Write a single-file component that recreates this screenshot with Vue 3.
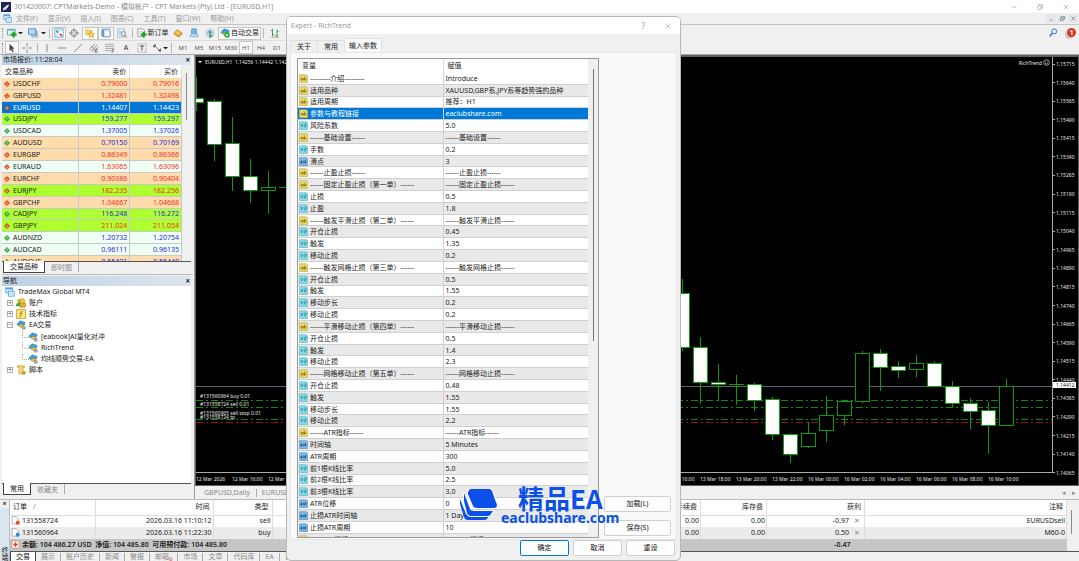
<script setup>
const hat = '<path d="M1 5L5 1L11 3L10 6Q5 5 3 7Z" fill="#3aa0d8" stroke="#1d6fa5" stroke-width=".6"/><path d="M4 6Q7 5 9 6L9 8Q6 10 4 8Z" fill="#f2c43c" stroke="#a8801a" stroke-width=".5"/>'
const icons = {
  app: '<rect width="12" height="12" fill="#1b2452"/><path d="M2 8L7 4L10 3L8 7L4 9Z" fill="#dfe4f4"/><path d="M2 10L7 8" stroke="#fff"/>',
  windows: '<rect x="1" y="1" width="8" height="6" fill="#dff0fb" stroke="#4a9fdc"/><path d="M1 2H9" stroke="#4a9fdc" stroke-width="1.5"/><rect x="4" y="5" width="7" height="6" fill="#e8f5fd" stroke="#4a9fdc"/><path d="M5 9L7 7L9 9" stroke="#4a9fdc" fill="none" stroke-width=".7"/>',
  newchart: '<rect x=".7" y="1.5" width="9" height="7" fill="#eaf5fa" stroke="#55a5a5"/><path d="M1 2.5H9" stroke="#3b8fb5"/><path d="M8 4.5V11.5M4.5 8H11.5" stroke="#16a51c" stroke-width="2.6"/>',
  profiles: '<rect x=".7" y="1" width="8.5" height="6.5" fill="#b9daf0" stroke="#4b88b8"/><path d="M3 9.5H10.5V3" stroke="#4b88b8" fill="none"/><path d="M5 11H12V5" stroke="#6f9dc0" fill="none" stroke-width=".8"/>',
  market: '<rect x="1" y="1" width="10" height="10" fill="#f5fbff" stroke="#5aa6da"/><path d="M3 3L5.5 5.5L3 6Z" fill="#25a03a"/><path d="M3 3L5 5" stroke="#25a03a" stroke-width="1.6"/><path d="M7 7L9.5 9.5" stroke="#e1452b" stroke-width="2.2"/><path d="M6 3H10M2 8.5H5" stroke="#9ac" stroke-width=".7"/>',
  target: '<circle cx="6" cy="6" r="3.8" fill="none" stroke="#777"/><path d="M6 0V5M6 7V12M0 6H5M7 6H12" stroke="#777"/>',
  navigator: '<path d="M1 2H4L5 3H8V8H1Z" fill="#f6d567" stroke="#c09a2a" stroke-width=".6"/><path d="M7.500 4L8.800 6.500L11.500 7L9.500 8.800L10 11.500L7.500 10.200L5 11.500L5.500 8.800L3.600 7L6.300 6.500Z" fill="#fbd443" stroke="#b88b16" stroke-width=".6"/>',
  data: '<rect x="1" y="1.500" width="10" height="9" rx="1" fill="#fff" stroke="#4178ba"/><rect x="1.500" y="2" width="2.500" height="8" fill="#5b94cf"/><path d="M5 3.500H10" stroke="#bcd"/>',
  tester: '<rect x="1" y="1" width="8" height="10" fill="#e7f1fa" stroke="#7aa6cb" stroke-width=".7"/><path d="M2 4H8M2 6H8M3 2V9" stroke="#9bb8d2" stroke-width=".5"/><circle cx="7.500" cy="7" r="2.700" fill="#d8ecf8" stroke="#6d87a0"/><path d="M9.500 9L11.500 11.500" stroke="#c59a2c" stroke-width="1.500"/>',
  order: '<path d="M1 1H7L9 3V10H1Z" fill="#fff" stroke="#777" stroke-width=".8"/><path d="M2.500 4H6M2.500 6H5" stroke="#999" stroke-width=".7"/><path d="M8 4.500V11.500M4.500 8H11.500" stroke="#16a51c" stroke-width="2.600"/>',
  editor: '<path d="M1 6L5 2L11 6L7 10Z" fill="#f0b93a" stroke="#a97515" stroke-width=".7"/><path d="M1 6L7 10L11 6V7.500L7 11.500L1 7.500Z" fill="#c98a1e"/><path d="M4 5L7 7" stroke="#fbe7a8"/>',
  cloud: '<rect x="3" y="1" width="6" height="6" rx="1" fill="#6eb8ee" stroke="#3c87c4" stroke-width=".8"/><path d="M2 10.500Q0 8 3 7.500Q5 5 7 7.500Q11 6.500 11 9Q11 10.500 9.500 10.500Z" fill="#c3def2" stroke="#5d97c6" stroke-width=".7"/>',
  signal: '<circle cx="6" cy="6" r="5" fill="none" stroke="#a9c9df"/><circle cx="6" cy="6" r="3" fill="none" stroke="#5e9fce"/><circle cx="6" cy="5" r="1.500" fill="#2f86c8"/><path d="M6 6V11L9 9" stroke="#2ea23a" stroke-width="1.500" fill="none"/>',
  auto: hat + '<circle cx="8.500" cy="8.500" r="3.300" fill="#1fae38"/><path d="M7.500 6.800L10.300 8.500L7.500 10.200Z" fill="#fff"/>',
  bars: '<path d="M3 1V10M1 3H3M3 8H5M8.500 2V11M6.500 9H8.500M8.500 4H10.500" stroke="#3a8a4a" fill="none"/><path d="M1 11H11" stroke="#777" stroke-width=".7"/>',
  cursor: '<path d="M3 1L9 7H6.500L8 10.500L6.500 11.200L5 7.800L3 9.500Z" fill="#444"/>',
  cross: '<path d="M6 0V4.500M6 7.500V12M0 6H4.500M7.500 6H12" stroke="#777"/>',
  vline: '<path d="M6 1V11" stroke="#777"/>',
  hline: '<path d="M1 6H11" stroke="#777"/>',
  trend: '<path d="M1.500 10.500L10.500 1.500" stroke="#777"/>',
  channel: '<path d="M0 8L7 1M2 10L10 2M4 11L11 5M3 4L7 8" stroke="#666" stroke-width=".8"/><path d="M8 8H11M8 8V12M8 10H10M8 12H11" stroke="#555" stroke-width=".8"/>',
  fibo: '<path d="M0 1.500H11M0 4H11M0 6.500H11M0 9H7" stroke="#888" stroke-width=".8"/><path d="M8.500 8V12M8.500 8H11M8.500 10H10.500" stroke="#555" stroke-width=".8"/>',
  label: '<rect x="1" y="1" width="10" height="10" fill="none" stroke="#888" stroke-dasharray="2 1" stroke-width=".8"/><path d="M3.500 3.500H8.500M6 3.500V9" stroke="#555" stroke-width="1.200"/>',
  arrows: '<path d="M1 3.500L4 1L5 4.500L3.500 4.500L2.500 6Z" fill="#666"/><path d="M4 4L8 8" stroke="#666"/><path d="M7 9L11 6L10.500 11Z" fill="#666"/>',
  accounts: '<circle cx="4" cy="3.500" r="2.500" fill="#e8b22c"/><path d="M0 10Q0 5.500 4 5.500Q7 5.500 7 10Z" fill="#2fae3d"/><circle cx="7.500" cy="3.800" r="3" fill="#f1c945" stroke="#a67a10" stroke-width=".6"/><rect x="4.500" y="6" width="7" height="5" rx="1" fill="#e3b02b" stroke="#9a7110" stroke-width=".6"/>',
  func: '<rect x=".8" y=".8" width="10.400" height="10.400" fill="#ffe680" stroke="#c69b29"/><path d="M8 3Q6 2.500 6 5L5.300 8.500Q5 10 4 9.300M4.300 5.500H7.500" stroke="#8a6713" fill="none" stroke-width=".9"/>',
  expert: hat + '<circle cx="9.300" cy="9.300" r="1.900" fill="#bbb" stroke="#666" stroke-width=".7"/>',
  script: '<path d="M2 1H10V3H8.500V8H11V10.500H3.500V3H2Z" fill="#f7da6b" stroke="#b08c22" stroke-width=".7"/><circle cx="9" cy="9.500" r="1.700" fill="#d8a820" stroke="#8a6713" stroke-width=".5"/>',
  ab: '<path d="M.5 1H10L11.500 2.500V11.500H.5Z" fill="#e8d96a" stroke="#c0ae45" stroke-width=".9"/><circle cx="4" cy="7" r="1.300" fill="none" stroke="#6b5e12" stroke-width=".9"/><path d="M5.500 5.500V8.500M7.200 3.500V8.500" stroke="#6b5e12" stroke-width=".8"/><circle cx="8.400" cy="7" r="1.200" fill="none" stroke="#6b5e12" stroke-width=".8"/>',
  num: '<path d="M.5 1H10L11.500 2.500V11.500H.5Z" fill="#86dbe8" stroke="#58b9ca" stroke-width=".9"/><path d="M2.500 4L4 8L5.500 4M7 4H9.500V6H7.500V8H9.500" fill="none" stroke="#2b7f93" stroke-width=".9"/>',
  int: '<path d="M.5 1H10L11.500 2.500V11.500H.5Z" fill="#7db8e8" stroke="#4f8ec6" stroke-width=".9"/><path d="M2.500 5.500H4V8H2.500V6.500H4M5.500 5.500H7V8H5.500M8.800 4V8.500" fill="none" stroke="#14406f" stroke-width="1"/>',
  up: '<path d="M6 .8L11.200 6L6 11.200L.8 6Z" fill="#35b44a" stroke="#1b7a2c"/><path d="M6 3.500V8.500M4 5.500L6 3.500L8 5.500" stroke="#b5ebb5" fill="none"/>',
  down: '<path d="M6 .8L11.200 6L6 11.200L.8 6Z" fill="#e65228" stroke="#a8300f"/><path d="M6 3.500V8.500M4 6.500L6 8.500L8 6.500" stroke="#ffc4a8" fill="none"/>',
  sell: '<path d="M1.500 .8H7L9.500 3.300V10.800H1.500Z" fill="#fff" stroke="#888" stroke-width=".8"/><circle cx="9" cy="9" r="2.800" fill="#e2502a"/>',
  buy: '<path d="M1.500 .8H7L9.500 3.300V10.800H1.500Z" fill="#fff" stroke="#888" stroke-width=".8"/><circle cx="9" cy="9" r="2.800" fill="#2d8edb"/>',
  balance: '<rect x=".8" y=".8" width="10.400" height="10.400" rx="2" fill="#fbe9e3" stroke="#9b9b9b"/><path d="M6 3V9M3 6H9" stroke="#d8431d" stroke-width="1.800"/>',
  search: '<circle cx="7" cy="4.500" r="3.300" fill="#e6f0ff" stroke="#3c6fd0" stroke-width="1.300"/><path d="M4.500 7L1 11" stroke="#3c6fd0" stroke-width="2"/>'
}
const menus = ['文件(F)', '显示(V)', '插入(I)', '图表(C)', '工具(T)', '窗口(W)', '帮助(H)']
const bar1 = [
  { i: 'newchart', w: 'w14', t: '新图表' }, { caret: 1 }, { i: 'profiles', w: 'w18', t: '配置' }, { caret: 1 }, { sep: 1 },
  { i: 'market', w: 'w14', on: 1, t: '市场报价' }, { i: 'target', w: 'w16', t: '数据窗口' }, { i: 'navigator', w: 'w16', on: 1, t: '导航' },
  { i: 'data', w: 'w16', on: 1, t: '终端' }, { i: 'tester', w: 'w16', t: '测试' }, { sep: 1 },
  { i: 'order', w: 'w36', label: '新订单' }, { i: 'editor', w: 'w16', t: '编辑器' }, { i: 'cloud', w: 'w16', t: '云' },
  { i: 'signal', w: 'w16', t: '信号' }, { i: 'auto', w: 'w44', label: '自动交易', on: 1 }, { sep: 1 }, { i: 'bars', w: 'w18', t: '柱状图' }
]
const bar2 = [
  { i: 'cursor', w: 'w14', on: 1, t: '光标' }, { i: 'cross', w: 'w16', t: '十字' }, { sep: 1 }, { i: 'vline', w: 'w14', t: '垂直线' },
  { i: 'hline', w: 'w16', t: '水平线' }, { i: 'trend', w: 'w16', t: '趋势线' }, { i: 'channel', w: 'w16', t: '通道' },
  { i: 'fibo', w: 'w16', t: '斐波那契' }, { label: 'A', w: 'w16' }, { i: 'label', w: 'w16', t: '标签' },
  { i: 'arrows', w: 'w14', t: '箭头' }, { caret: 1 }, { sep: 1 }, { gap: 1 },
  { label: 'M1', w: 'w16 tf' }, { label: 'M5', w: 'w16 tf' }, { label: 'M15', w: 'w16 tf' }, { label: 'M30', w: 'w16 tf' },
  { label: 'H1', w: 'w14 tf', on: 1 }, { label: 'H4', w: 'w16 tf' }, { label: 'D1', w: 'w16 tf' }
]
const quotes = [
  ['USDCHF', '0.79000', '0.79016', 'down', 'peach'], ['GBPUSD', '1.32481', '1.32498', 'down', 'peach'],
  ['EURUSD', '1.14407', '1.14423', 'down', 'sel'], ['USDJPY', '159.277', '159.297', 'up', 'lime'],
  ['USDCAD', '1.37005', '1.37026', 'up', 'mint'], ['AUDUSD', '0.70150', '0.70169', 'up', 'peach'],
  ['EURGBP', '0.86349', '0.86366', 'down', 'peach'], ['EURAUD', '1.63065', '1.63096', 'down', 'mint'],
  ['EURCHF', '0.90386', '0.90404', 'down', 'peach'], ['EURJPY', '182.235', '182.256', 'down', 'lime'],
  ['GBPCHF', '1.04667', '1.04688', 'down', 'peach'], ['CADJPY', '116.248', '116.272', 'up', 'lime'],
  ['GBPJPY', '211.024', '211.054', 'down', 'lime'], ['AUDNZD', '1.20732', '1.20754', 'up', 'mint'],
  ['AUDCAD', '0.96111', '0.96135', 'up', 'mint'], ['AUDCHF', '0.55421', '0.55440', 'up', 'peach']
]
const tree = [
  ['windows', 'TradeMax Global MT4', 0, ''], ['accounts', '账户', 1, '+'], ['func', '技术指标', 1, '+'], ['expert', 'EA交易', 1, '−'],
  ['expert', '[eabook]AI量化对冲', 2, ''], ['expert', 'RichTrend', 2, ''], ['expert', '均线顺势交易-EA', 2, ''], ['script', '脚本', 1, '+']
]
const params = [
  ['ab', '---------介绍---------', 'Introduce'], ['ab', '适用品种', 'XAUUSD,GBP系,JPY系等趋势强的品种'],
  ['ab', '适用周期', '推荐：H1'], ['ab', '参数与教程链接', 'eaclubshare.com'], ['num', '风险系数', '5.0'],
  ['ab', '------基础设置------', '------基础设置------'], ['num', '手数', '0.2'], ['int', '滑点', '3'],
  ['ab', '------止盈止损------', '------止盈止损------'], ['ab', '------固定止盈止损（第一单）------', '------固定止盈止损------'],
  ['num', '止损', '0.5'], ['num', '止盈', '1.8'], ['ab', '------触发平滑止损（第二单）------', '------触发平滑止损------'],
  ['num', '开仓止损', '0.45'], ['num', '触发', '1.35'], ['num', '移动止损', '0.2'],
  ['ab', '------触发网格止损（第三单）------', '------触发网格止损------'], ['num', '开仓止损', '0.5'], ['num', '触发', '1.55'],
  ['num', '移动步长', '0.2'], ['num', '移动止损', '0.2'], ['ab', '------平滑移动止损（第四单）------', '------平滑移动止损------'],
  ['num', '开仓止损', '0.5'], ['num', '触发', '1.4'], ['num', '移动止损', '2.3'],
  ['ab', '------网格移动止损（第五单）------', '------网格移动止损------'], ['num', '开仓止损', '0.48'], ['num', '触发', '1.55'],
  ['num', '移动步长', '1.55'], ['num', '移动止损', '2.2'], ['ab', '------ATR指标------', '------ATR指标------'],
  ['int', '时间轴', '5 Minutes'], ['int', 'ATR周期', '300'], ['num', '前1根K线比率', '5.0'], ['num', '前2根K线比率', '2.5'],
  ['num', '前3根K线比率', '3.0'], ['int', 'ATR位移', '0'], ['int', '止损ATR时间轴', '1 Day'], ['int', '止损ATR周期', '10'],
  ['ab', '------MA指标------', '------MA指标------']
]
// x, high, top, bottom, low, filled
const candles = [
  [196, 77, 98, 102, 111, 1], [214, 99, 101, 144, 161, 1], [232, 117, 143, 176, 191, 1], [250, 159, 176, 190, 203, 1],
  [268, 171, 187, 190, 214, 0], [286, 161, 187, 187, 208, 0], [682, 279, 293, 347, 351, 1], [700, 337, 347, 382, 404, 1],
  [718, 364, 382, 384, 401, 1], [736, 375, 384, 384, 405, 0], [754, 383, 384, 400, 411, 1], [772, 397, 399, 434, 440, 1],
  [790, 433, 434, 454, 463, 1], [808, 422, 433, 446, 448, 0], [826, 396, 415, 430, 442, 0], [844, 400, 401, 415, 425, 0],
  [862, 351, 353, 401, 403, 0], [880, 349, 353, 367, 391, 1], [898, 361, 366, 370, 378, 1], [916, 355, 363, 369, 377, 0],
  [934, 361, 363, 386, 386, 1], [952, 381, 386, 403, 408, 1], [970, 398, 403, 411, 429, 1], [988, 402, 410, 425, 454, 1],
  [1006, 379, 386, 425, 425, 0]
]
const prices = Array.from({ length: 23 }, (_, n) => (1.15715 - n * 0.00075).toFixed(5))
const times = ['12 Mar 2026', '12 Mar 16:00', '12 Mar 18:00', '12 Mar 20:00', '12 Mar 22:00', '13 Mar 00:00', '13 Mar 02:00',
  '13 Mar 04:00', '13 Mar 06:00', '13 Mar 08:00', '13 Mar 10:00', '13 Mar 12:00', '13 Mar 14:00', '13 Mar 16:00', '13 Mar 18:00',
  '13 Mar 20:00', '13 Mar 22:00', '16 Mar 00:00', '16 Mar 02:00', '16 Mar 04:00', '16 Mar 06:00', '16 Mar 08:00', '16 Mar 10:00']
const bottomTabs = ['展示', '账户历史', '新闻', '警报', '邮箱', '市场', '文章', '代码库', 'EA', '日志']
</script>

<template>
  <div class="window">
    <header class="titlebar">
      <svg class="ico" viewBox="0 0 12 12" v-html="icons.app" />
      <span class="caption">301420007: CPTMarkets-Demo - 模拟帐户 - CPT Markets (Pty) Ltd - [EURUSD,H1]</span>
      <div class="winbtns">
        <button aria-label="最小化"><svg viewBox="0 0 10 10"><path d="M1 5H9" /></svg></button>
        <button aria-label="还原"><svg viewBox="0 0 10 10"><rect x="1" y="3" width="6" height="6" rx="1" /><path d="M3 3V1H9V7H7" /></svg></button>
        <button aria-label="关闭"><svg viewBox="0 0 10 10"><path d="M1 1L9 9M9 1L1 9" /></svg></button>
      </div>
    </header>
    <nav class="menubar">
      <svg class="ico" viewBox="0 0 12 12" v-html="icons.windows" />
      <button v-for="m in menus" :key="m">{{ m }}</button>
      <div class="mdi">
        <button aria-label="最小化图表"><svg viewBox="0 0 10 10"><path d="M1 8H7" /></svg></button>
        <button aria-label="还原图表"><svg viewBox="0 0 10 10"><rect x="1" y="4" width="5" height="5" /><path d="M3 4V1H9V6H6" /></svg></button>
        <button aria-label="关闭图表"><svg viewBox="0 0 10 10"><path d="M1 1L8 9M8 1L1 9" /></svg></button>
      </div>
    </nav>
    <div class="tools">
      <div class="bars">
        <div v-for="(bar, b) in [bar1, bar2]" :key="b" class="toolbar">
          <i class="grip" />
          <template v-for="(t, n) in bar" :key="n">
            <i v-if="t.sep" class="sep" />
            <i v-else-if="t.caret" class="caret" />
            <i v-else-if="t.gap" class="gap" />
            <button v-else :class="['tool', t.w, { on: t.on }]" :aria-label="t.label || t.t">
              <svg v-if="t.i" class="ico" viewBox="0 0 12 12" v-html="icons[t.i]" /><span v-if="t.label">{{ t.label }}</span>
            </button>
          </template>
        </div>
      </div>
      <div class="alerts">
        <button aria-label="搜索"><svg class="ico small" viewBox="0 0 12 12" v-html="icons.search" /></button>
        <button class="bell" aria-label="通知"><b>1</b></button>
      </div>
    </div>

    <main class="work">
      <aside class="side">
        <section class="panel watch">
          <div class="head"><span>市场报价: 11:28:04</span><button aria-label="关闭市场报价">×</button></div>
          <div class="scroller">
            <div class="clip">
              <table class="quotes">
                <thead><tr><th>交易品种</th><th>卖价</th><th>买价</th></tr></thead>
                <tbody>
                  <tr v-for="q in quotes" :key="q[0]" :class="[q[4], q[3]]">
                    <td><svg class="dia" viewBox="0 0 12 12" v-html="icons[q[3]]" />{{ q[0] }}</td><td>{{ q[1] }}</td><td>{{ q[2] }}</td>
                  </tr>
                </tbody>
              </table>
            </div>
            <i class="thumb" />
          </div>
          <div class="tabs"><button class="active">交易品种</button><button>即时图</button></div>
        </section>
        <section class="panel nav">
          <div class="head"><span>导航</span><button aria-label="关闭导航">×</button></div>
          <div class="treebox">
            <ul class="tree">
              <li v-for="(n, k) in tree" :key="k" :class="'lv' + n[2]">
                <i v-if="n[3]" class="exp">{{ n[3] }}</i>
                <svg class="ico" viewBox="0 0 12 12" v-html="icons[n[0]]" />{{ n[1] }}
              </li>
            </ul>
          </div>
          <div class="tabs"><button class="active">常用</button><button>收藏夹</button></div>
        </section>
      </aside>

      <section class="chart">
        <div class="canvas">
          <div class="plotcol">
            <div class="plot">
              <svg class="candles" viewBox="196 57 856 415" preserveAspectRatio="none" shape-rendering="crispEdges">
                <path d="M196 386.5H1052" stroke="#57626f" />
                <g stroke="#138513" stroke-dasharray="7 3 2 3"><path d="M196 400.500H1052M196 407.500H1052M196 419.500H1052" /></g>
                <path d="M196 422.500H1052" stroke="#9c0d0d" stroke-dasharray="7 3 2 3" />
                <g v-for="c in candles" :key="c[0]" stroke="#0a9a0a">
                  <path :d="`M${c[0] + .5} ${c[1]}V${c[4]}`" />
                  <rect :x="c[0] - 6.5" :y="c[2] + .5" width="14" :height="c[3] - c[2]" :fill="c[5] ? '#fff' : '#000'" />
                  <path v-if="c[2] === c[3]" :d="`M${c[0] - 7} ${c[2] + .5}H${c[0] + 8}`" />
                </g>
              </svg>
              <span class="symbol">EURUSD,H1&nbsp; 1.14256 1.14442 1.14253 1.14412</span>
              <span class="ea">RichTrend <svg viewBox="0 0 10 10"><circle cx="5" cy="5" r="4" /><path d="M3 6Q5 8 7 6M3.500 3.500V4.500M6.500 3.500V4.500" /></svg></span>
              <span class="trade t1">#131560964 buy 0.01</span>
              <span class="trade t2">#131558724 sell 0.01</span>
              <span class="trade t3">#131560965 sell stop 0.01</span>
              <span class="trade t4">#131558724 tp</span>
            </div>
            <div class="timeaxis"><span v-for="t in times" :key="t">{{ t }}</span></div>
          </div>
          <div class="priceaxis">
            <span v-for="p in prices" :key="p">{{ p }}</span>
            <b class="now">1.14412</b>
          </div>
        </div>
        <div class="charttabs"><button>GBPUSD,Daily</button><button>EURUSD,H1</button><div class="arrows"><button aria-label="向左">◂</button><button aria-label="向右">▸</button></div></div>
      </section>
    </main>

    <section class="terminal">
      <div class="strip"><button aria-label="关闭终端">×</button><span>终端</span></div>
      <div class="termbody">
        <div class="termtable">
          <table>
            <colgroup><col class="c1"><col class="c2"><col class="c3"><col><col class="c5"><col class="c6"><col class="c7"></colgroup>
            <thead><tr><th>订单<em>/</em></th><th>时间</th><th>类型</th><th>手续费</th><th>库存费</th><th>获利</th><th>注释</th></tr></thead>
            <tbody>
              <tr><td><svg class="ico small" viewBox="0 0 12 12" v-html="icons.sell" />131558724</td><td>2026.03.16 11:10:12</td><td>sell</td><td>0.00</td><td>0.00</td><td>-0.97<button aria-label="平仓">✕</button></td><td>EURUSDsell</td></tr>
              <tr class="alt"><td><svg class="ico small" viewBox="0 0 12 12" v-html="icons.buy" />131560964</td><td>2026.03.16 11:22:30</td><td>buy</td><td>0.00</td><td>0.00</td><td>0.50<button aria-label="平仓">✕</button></td><td>M60-0</td></tr>
              <tr class="sum"><td colspan="5"><svg class="ico small" viewBox="0 0 12 12" v-html="icons.balance" />余额: 104 486.27 USD&nbsp; 净值: 104 485.80&nbsp; 可用预付款: 104 485.80</td><td class="total">-0.47</td><td></td></tr>
            </tbody>
          </table>
          <i class="thumb" />
        </div>
        <div class="termtabs"><button class="active">交易</button><button v-for="t in bottomTabs" :key="t">{{ t }}<sub v-if="t === '邮箱'">6</sub></button></div>
      </div>
    </section>

    <div class="dialog" role="dialog" aria-label="Expert - RichTrend">
      <div class="dtitle">
        <span>Expert - RichTrend</span>
        <button aria-label="帮助">?</button>
        <button aria-label="关闭"><svg viewBox="0 0 10 10"><path d="M1 1L9 9M9 1L1 9" /></svg></button>
      </div>
      <div class="dtabs"><button>关于</button><button>常用</button><button class="active">输入参数</button></div>
      <div class="page">
        <div class="list">
          <div class="listclip">
            <table class="params">
              <thead><tr><th>变量</th><th>赋值</th></tr></thead>
              <tbody>
                <tr v-for="(p, n) in params" :key="n" :class="n === 3 ? 'picked' : { alt: n % 2 }">
                  <td><svg class="ico" viewBox="0 0 12 12" v-html="icons[p[0]]" />{{ p[1] }}</td><td>{{ p[2] }}</td>
                </tr>
              </tbody>
            </table>
          </div>
          <i class="thumb" />
        </div>
        <div class="io"><button class="btn">加载(L)</button><button class="btn">保存(S)</button></div>
      </div>
      <div class="actions"><button class="btn primary">确定</button><button class="btn">取消</button><button class="btn">重设</button></div>
      <div class="mark">
        <svg viewBox="0 0 38 32">
          <path d="M1 10L7 25Q8 27 11 27H30L28 30Q27 31 25 31H9Q6 31 5 28L1 15Z" />
          <path class="edge" d="M5 4L11 20Q12 22 15 22H34L32 25Q31 27 29 27H12Q9 27 8 24L5 12Z" />
          <path class="edge" d="M12 0H30Q32 0 33 2L38 16Q38 19 35 19H18Q15 19 14 17L9 5L9 3Q10 0 12 0Z" />
        </svg>
        <div class="words"><strong>精品EA</strong><span>eaclubshare.com</span></div>
      </div>
    </div>
  </div>
</template>

<style>
html, body { margin: 0; background: #f0f0f0; }
</style>

<style scoped>
* { box-sizing: border-box; }
.window { position: relative; display: flex; flex-direction: column; min-height: 100vh; overflow: hidden; background: #f0f0f0; color: #222; font: 7px/10px "Noto Sans", "Noto Sans CJK SC", sans-serif; white-space: nowrap; }
button { appearance: none; border: 0; margin: 0; padding: 0; background: none; font: inherit; color: inherit; white-space: nowrap; }
i, em { font-style: normal; }
svg { display: block; flex: none; }
.ico { width: 10px; height: 10px; }
.ico.small { width: 9px; height: 9px; }
.titlebar { display: flex; align-items: center; height: 13px; padding-left: 1px; background: #fff; color: #8c8c8c; }
.caption { margin-left: 3px; }
.winbtns { display: flex; gap: 20px; margin-left: auto; padding-right: 10px; }
.winbtns svg, .mdi svg { width: 6px; height: 6px; fill: none; stroke: #999; }
.menubar { display: flex; align-items: center; gap: 10px; height: 12px; padding-left: 3px; border-bottom: 1px solid #c4c4c4; color: #9c9c9c; }
.menubar > .ico { width: 9px; height: 9px; margin-right: -6px; }
.mdi { display: flex; gap: 1px; margin-left: auto; padding-right: 1px; }
.mdi button { display: grid; place-items: center; width: 10px; height: 9px; background: #e4e8ec; }
.mdi svg { stroke: #71808f; stroke-width: 1.5; width: 5px; height: 5px; }
.tools { display: flex; justify-content: space-between; height: 30px; border-bottom: 1px solid #a8a8a8; }
.bars { padding-top: 1px; }
.toolbar { display: flex; align-items: center; height: 14px; padding-left: 2px; }
.toolbar + .toolbar { border-top: 1px solid #dcdcdc; }
.grip { width: 2px; height: 10px; margin-right: 1px; border-left: 1px dotted #888; }
.sep { width: 1px; height: 10px; margin: 0 2px; background: #bbb; }
.gap { width: 1px; }
.caret { width: 5px; border: solid transparent; border-width: 2px 2px 0; border-top-color: #222; margin: 0 1px 0 -1px; }
.tool { display: flex; align-items: center; justify-content: center; gap: 1px; height: 13px; flex: none; }
.tool.on { background: #fafafa; border: 1px solid #c6c6c6; }
.w14 { width: 14px; } .w16 { width: 16px; } .w18 { width: 18px; } .w36 { width: 35px; } .w44 { width: 43px; }
.tf { font-size: 6px; color: #555; }
.alerts { display: flex; gap: 9px; align-items: flex-start; padding: 3px 3px 0 0; }
.bell b { display: block; width: 9px; height: 9px; border-radius: 50%; background: #e0321a; color: #fff; font-size: 7px; line-height: 9px; box-shadow: -2px 2px 0 #c8c8c8; }
.work { flex: 1; display: flex; min-height: 0; }
.side { display: flex; flex-direction: column; width: 195px; padding: 0 1px 0 2px; border-right: 1px solid #999; }
.panel { display: flex; flex-direction: column; padding-right: 2px; }
.head { display: flex; justify-content: space-between; align-items: center; height: 10px; padding: 0 1px; background: linear-gradient(90deg, #bdd0e4, #dde5ee); color: #222; }
.head button { font: bold 8px/8px "Noto Sans", sans-serif; }
.watch { height: 219px; }
.scroller { display: flex; flex: 1; min-height: 0; border-bottom: 1px solid #555; }
.clip { width: 180px; overflow: hidden; background: #fff; }
.quotes { width: 100%; height: 203px; border-collapse: collapse; table-layout: fixed; }
.quotes th { height: 13px; padding: 0 3px; font-weight: 400; text-align: right; border-right: 1px solid #ddd; }
.quotes th:first-child { width: 76px; text-align: left; }
.quotes td { padding: 0 2px; text-align: right; line-height: 9px; border-bottom: 1px solid #c8c8c8; border-right: 1px solid #c8c8c8; }
.quotes td:first-child { text-align: left; color: #222; }
.dia { display: inline-block; width: 6px; height: 6px; margin-right: 3px; vertical-align: -1px; }
.peach { background: #ffdcac; } .mint { background: #f0fff4; } .lime { background: #adff2f; }
.up td { color: #2727e8; } .down td { color: #f52c1c; }
.quotes .sel, .params .picked { background: #0078d7; }
.quotes .sel td, .quotes .sel td:first-child { color: #fff; }
.thumb { width: 1px; background: #8a8a8a; }
.scroller .thumb { height: 47px; margin: 8px 0 0 4px; }
.tabs { display: flex; height: 12px; color: #8b8b8b; }
.tabs button { padding: 0 6px; height: 10px; line-height: 9px; border-right: 1px solid #aaa; }
.tabs .active { margin: -1px 0 0 1px; height: 12px; border: 1px solid #444; border-top: 0; background: #fff; color: #111; }
.nav { flex: 1; min-height: 0; border-top: 1px solid #bbb; padding-top: 1px; }
.treebox { flex: 1; background: #fff; border-bottom: 1px solid #555; }
.tree { display: grid; grid-auto-rows: 1fr; height: 90px; margin: 0; padding: 0 0 0 3px; list-style: none; }
.tree li { position: relative; display: flex; align-items: center; gap: 3px; }
.lv1 { padding-left: 2px; } .lv2 { padding-left: 23px; }
.lv2::before { content: ""; position: absolute; left: 17px; top: 0; width: 6px; height: 50%; border: dotted #aaa; border-width: 0 0 1px 1px; }
.exp { display: grid; place-items: center; width: 6px; height: 6px; border: 1px solid #aaa; font-size: 6px; line-height: 4px; color: #335; }
.nav .tabs { height: 15px; }
.chart { flex: 1; display: flex; flex-direction: column; min-width: 0; }
.canvas { flex: 1; display: flex; min-height: 0; border: solid #606060; border-width: 2px 1px 1px 1px; background: #000; color: #e6e6e6; font-size: 5px; line-height: 6px; }
.plotcol { flex: 1; display: flex; flex-direction: column; min-width: 0; }
.plot { position: relative; flex: 1; min-height: 0; border-right: 1px solid #aaa; border-bottom: 1px solid #aaa; }
.candles { position: absolute; width: 100%; height: 100%; }
.candles path, .candles rect { vector-effect: non-scaling-stroke; }
.candles path { fill: none; }
.symbol { position: absolute; left: 9px; top: 2px; }
.symbol::before { content: ""; position: absolute; left: -7px; top: 2px; border: solid transparent; border-width: 2px 2px 0; border-top-color: #fff; }
.ea { position: absolute; right: 2px; top: 2px; display: flex; align-items: center; gap: 1px; }
.ea svg { width: 7px; height: 7px; fill: none; stroke: #ddd; }
.trade { position: absolute; left: 4px; }
.t1 { top: 81%; } .t2 { top: 83%; } .t3 { top: 85%; } .t4 { top: 86%; }
.timeaxis { display: flex; height: 12px; overflow: hidden; padding-top: 3px; }
.timeaxis span { flex: 0 0 36px; }
.priceaxis { position: relative; display: flex; flex-direction: column; justify-content: space-between; width: 25px; padding: 4px 0 9px; }
.priceaxis span { display: flex; align-items: center; gap: 1px; }
.priceaxis span::before { content: ""; width: 2px; height: 1px; background: #aaa; }
.now { position: absolute; left: 0; top: 76%; width: 23px; padding-left: 3px; background: #fff; color: #222; font-weight: 400; }
.charttabs { display: flex; align-items: center; height: 13px; padding-left: 4px; color: #8b8b8b; }
.charttabs > button { padding: 0 6px 0 5px; border-right: 1px solid #aaa; line-height: 8px; }
.arrows { margin-left: auto; display: flex; gap: 6px; padding-right: 3px; }
.terminal { display: flex; height: 62px; border-top: 1px solid #bbb; }
.strip { display: flex; flex-direction: column; justify-content: space-between; align-items: center; width: 9px; background: #dce6f1; overflow: hidden; }
.strip button { width: 100%; background: #f0f0f0; font-weight: bold; line-height: 8px; }
.strip span { writing-mode: vertical-rl; line-height: 9px; }
.termbody { flex: 1; display: flex; flex-direction: column; min-width: 0; border-left: 1px solid #bbb; }
.termtable { display: flex; border-bottom: 1px solid #555; }
.termtable table { flex: 1; border-collapse: collapse; table-layout: fixed; background: #fff; }
.c1 { width: 85px; } .c2 { width: 118px; } .c3 { width: 59px; } .c5 { width: 66px; } .c6 { width: 98px; } .c7 { width: 202px; }
.termtable th { height: 15px; padding: 0 3px; font-weight: 400; text-align: right; border-right: 1px solid #ddd; border-bottom: 1px solid #ddd; }
.termtable th:first-child, .termtable td:first-child { text-align: left; }
.termtable td { height: 12px; padding: 0 1px; text-align: right; border-right: 1px solid #ddd; }
.termtable td .ico { display: inline-block; margin-right: 2px; vertical-align: -2px; }
.termtable em { margin-left: 6px; color: #888; }
.termtable td button { margin: 0 3px 0 5px; color: #888; line-height: 8px; }
.termtable .alt { background: #ebebeb; }
.termtable .sum { background: #c6c6c6; font-weight: 600; }
.termtable .sum td { border: 0; }
.termtable .total { padding-right: 14px; }
.termtable .thumb { height: 24px; margin: 10px 7px 0 4px; }
.termtabs { display: flex; align-items: center; height: 10px; color: #8b8b8b; }
.termtabs button { padding: 0 5px; line-height: 8px; border-right: 1px solid #aaa; }
.termtabs .active { height: 10px; border: 1px solid #444; border-top: 0; background: #fff; color: #111; }
.termtabs sub { color: #e33; font-size: 6px; line-height: 0; }
.dialog { position: absolute; left: 286px; top: 16px; bottom: 0; width: 395px; display: flex; flex-direction: column; background: #f0f0f0; border: 1px solid #b8b8b8; border-radius: 5px; overflow: hidden; }
.dtitle { display: flex; align-items: center; flex: none; height: 17px; padding: 0 9px 0 4px; background: #fff; color: #9a9a9a; }
.dtitle span { flex: 1; }
.dtitle button { margin-left: 20px; font-size: 8px; }
.dtitle svg { width: 6px; height: 6px; fill: none; stroke: #999; }
.dtabs { display: flex; align-items: flex-end; flex: none; height: 18px; padding: 0 3px; }
.dtabs button { padding: 0 6px; height: 12px; border: 1px solid #e0e0e0; border-bottom: 0; }
.dtabs button + button { border-left: 0; }
.dtabs .active { height: 14px; padding: 0 4px; background: #fafafa; }
.page { flex: 1; min-height: 0; display: flex; margin: 0 3px; padding: 5px 5px 1px 6px; background: #f9f9f9; border: 1px solid #e6e6e6; }
.list { display: flex; width: 302px; border: 1px solid #999; background: #f0f0f0; }
.listclip { flex: 0 0 290px; overflow: hidden; background: #fff; }
.params { width: 100%; height: 487px; border-collapse: collapse; table-layout: fixed; }
.params th { height: 14px; padding: 0 4px; text-align: left; font-weight: 400; }
.params th:first-child { width: 145px; border-right: 1px solid #ddd; }
.params td { padding: 0 2px; line-height: 9px; border-bottom: 1px solid #cfcfcf; overflow: hidden; }
.params td:first-child { padding-left: 1px; border-right: 1px solid #cfcfcf; }
.params td .ico { display: inline-block; margin-right: 2px; width: 9px; height: 9px; vertical-align: -2px; }
.params .alt { background: #e9e9e9; }
.params .picked td { color: #fff; }
.list .thumb { height: 272px; margin: 10px 0 0 5px; background: #777; }
.io { flex: 1; display: flex; flex-direction: column; justify-content: flex-end; gap: 8px; padding: 0 0 2px 5px; }
.btn { height: 16px; border: 1px solid #d0d0d0; border-radius: 2px; background: #fdfdfd; color: #111; }
.btn.primary { border-color: #0078d7; }
.actions { display: flex; flex: none; justify-content: flex-end; gap: 4px; height: 20px; padding-right: 5px; }
.actions .btn { width: 49px; }
.mark { position: absolute; left: 172px; bottom: 35px; display: flex; align-items: center; gap: 4px; color: #0b50e8; pointer-events: none; }
.mark svg { width: 38px; height: 32px; fill: #0b50e8; }
.mark .edge { stroke: #fff; stroke-width: 2; paint-order: stroke; }
.words { display: flex; flex-direction: column; align-items: center; font-weight: 700; }
.words strong { font: 700 26px/26px "Noto Sans CJK SC", sans-serif; }
.words span { font-size: 14px; line-height: 14px; }
</style>
